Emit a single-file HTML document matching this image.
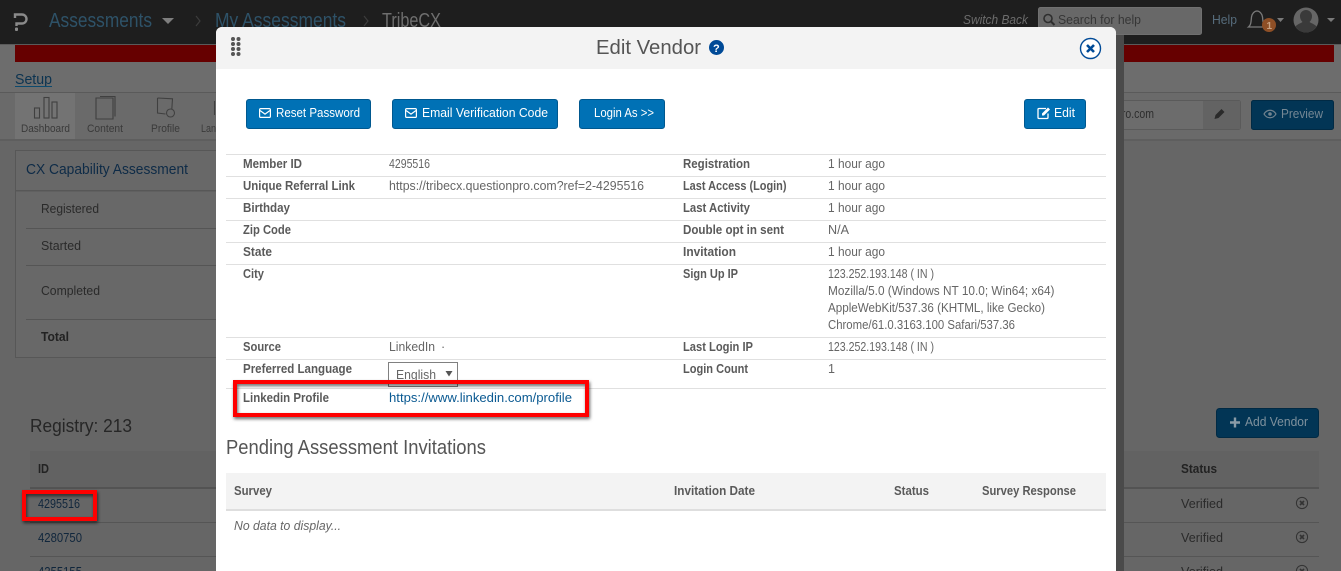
<!DOCTYPE html>
<html><head><meta charset="utf-8"><title>Edit Vendor</title>
<style>
html,body{margin:0;padding:0;width:1341px;height:571px;overflow:hidden;background:#666}
svg{display:block}
text{font-family:"Liberation Sans",sans-serif;font-size:12.5px}
.l{font-weight:bold;fill:#5a5a5a}
.v{fill:#666}
.b{fill:#fff;font-size:13px}
.bg{fill:#2a2a2a}
.t{font-size:11px;fill:#3a3a3a}
</style></head><body>
<svg xmlns="http://www.w3.org/2000/svg" width="1341" height="571" viewBox="0 0 1341 571">
<defs>
<filter id="s" x="-20%" y="-30%" width="140%" height="160%"><feDropShadow dx="1" dy="2" stdDeviation="1.5" flood-color="#000" flood-opacity=".6"/></filter>
<g id="mail" fill="none" stroke="#fff" stroke-width="1.2"><rect x="0.6" y="0.6" width="10.8" height="8.8" rx="1.2"/><path d="M1 2.5l5 3.6 5-3.6"/></g>
<g id="xc" fill="none" stroke="#333"><circle cx="0" cy="0" r="5.6"/><path d="M-2-2L2 2M2-2L-2 2" stroke-width="1.6"/></g>
</defs>

<!-- page background -->
<rect width="1341" height="571" fill="#666"/>
<rect y="44" width="1341" height="49" fill="#6d6d6d"/>
<rect y="0" width="1341" height="44" fill="#1e1e1e"/>
<rect y="44" width="1341" height="1" fill="#5a5a5a"/>
<rect x="15" y="45" width="1319" height="17" fill="#660000"/>
<text x="15" y="84" textLength="37" lengthAdjust="spacingAndGlyphs" style="font-size:14.5px" fill="#0c3350">Setup</text>
<rect x="15" y="86" width="37" height="1" fill="#0c4a6e"/>
<rect y="93" width="1341" height="46" fill="#6a6a6a"/>
<rect y="92" width="1341" height="1" fill="#5a5a5a"/>
<rect y="139" width="1341" height="2" fill="#5e5e5e"/>
<rect x="15" y="93" width="60" height="46" fill="#737373"/>

<!-- top bar -->
<path d="M15 18v-3.500h7a4.500 4.500 0 0 1 0 9h-5.500v2.500" fill="none" stroke="#8a8a8a" stroke-width="2.400"/><rect x="15" y="27.500" width="3" height="3.500" rx="1" fill="#8a8a8a"/>
<text x="49" y="27" textLength="103" lengthAdjust="spacingAndGlyphs" style="font-size:20.500px" fill="#2e5268">Assessments</text>
<path d="M162 18h12l-6 6z" fill="#7e7e7e"/>
<path d="M196 16l4 5-4 5" fill="none" stroke="#3c3c3c" stroke-width="1.200"/>
<text x="215" y="27" textLength="131" lengthAdjust="spacingAndGlyphs" style="font-size:20.500px" fill="#2e5268">My Assessments</text>
<path d="M364 16l4 5-4 5" fill="none" stroke="#3c3c3c" stroke-width="1.200"/>
<text x="382" y="27" textLength="59" lengthAdjust="spacingAndGlyphs" style="font-size:20.500px" fill="#6e6e6e">TribeCX</text>

<text x="963" y="24" textLength="65" lengthAdjust="spacingAndGlyphs" font-style="italic" fill="#6c6c6c">Switch Back</text>
<rect x="1038.500" y="7.500" width="163" height="27" rx="2" fill="#686868" stroke="#707070"/>
<circle cx="1048" cy="18.500" r="4" fill="none" stroke="#2e2e2e" stroke-width="1.600"/><path d="M1051 21.500l3.500 3.500" stroke="#2e2e2e" stroke-width="2"/>
<text x="1058" y="24" textLength="83" lengthAdjust="spacingAndGlyphs" fill="#363636">Search for help</text>
<text x="1212" y="24" textLength="25" lengthAdjust="spacingAndGlyphs" fill="#566c7c">Help</text>
<path d="M1248.500 27c2.500-2 2.500-5 3-10 .5-3.500 3-6 5.500-6s5 2.500 5.500 6c.5 5 .5 8 3 10z" fill="none" stroke="#7a7a7a" stroke-width="1.300"/>
<circle cx="1269" cy="25" r="7" fill="#8e4f26"/>
<text x="1266.500" y="29" style="font-size:10px;font-weight:bold" fill="#c9a283">1</text>
<path d="M1277 18h7l-3.500 4z" fill="#7a7a7a"/>
<circle cx="1306" cy="20" r="12.500" fill="#666"/>
<path d="M1306 32.500a12.500 12.500 0 0 0 10.500-6c-2-2.500-5-3-7-4.500 2-2 2.500-4 2.500-6a6 6 0 0 0-12 0c0 2 .5 4 2.500 6-2 1.500-5 2-7 4.500a12.500 12.500 0 0 0 10.500 6z" fill="#3a3a3a"/>
<path d="M1327 18h8l-4 4z" fill="#7a7a7a"/>

<!-- toolbar -->
<g fill="none" stroke="#404040" stroke-width="1.100">
<rect x="34.500" y="108" width="5" height="10"/><rect x="44" y="97.500" width="5" height="20.500"/><rect x="52" y="102" width="5" height="16"/>
<path d="M96 98h17v21H96z"/><path d="M100 96.500h15v20"/>
<path d="M157.500 98l15 .8-.7 10.500M157.500 98v15l8 1"/><circle cx="170.500" cy="113" r="4"/>
<path d="M214.500 101v14"/>
</g>
<text x="21" y="132" textLength="49" lengthAdjust="spacingAndGlyphs" class="t">Dashboard</text>
<text x="87" y="132" textLength="36" lengthAdjust="spacingAndGlyphs" class="t">Content</text>
<text x="151" y="132" textLength="29" lengthAdjust="spacingAndGlyphs" class="t">Profile</text>
<text x="201" y="132" textLength="15" lengthAdjust="spacingAndGlyphs" class="t">Lan</text>
<rect x="1116" y="100.500" width="124.500" height="29" rx="2" fill="#6c6c6c" stroke="#5a5a5a"/>
<rect x="1203" y="101" width="37" height="28" fill="#636363"/>
<text x="1116" y="118" textLength="38" lengthAdjust="spacingAndGlyphs" fill="#2e2e2e">pro.com</text>
<path d="M1214.500 119l1-4 6-6 3 3-6 6z" fill="#2a2a2a"/>
<rect x="1251.500" y="100.500" width="82" height="29" rx="2" fill="#023555" stroke="#012a44"/>
<path d="M1264 114c3-5 9-5 12 0-3 5-9 5-12 0z" fill="none" stroke="#71838f" stroke-width="1.200"/><circle cx="1270" cy="114" r="1.800" fill="#71838f"/>
<text x="1281" y="118" textLength="42" lengthAdjust="spacingAndGlyphs" fill="#748794">Preview</text>

<!-- card -->
<rect x="15.500" y="150.500" width="220" height="207" fill="#686868" stroke="#575757"/>
<rect x="16" y="190" width="220" height="1.500" fill="#575757"/>
<rect x="26" y="228" width="200" height="1" fill="#555"/>
<rect x="26" y="265" width="200" height="1" fill="#555"/>
<rect x="26" y="319" width="200" height="1" fill="#555"/>
<text x="26" y="174" textLength="162" lengthAdjust="spacingAndGlyphs" style="font-size:14.500px" fill="#0e2b47">CX Capability Assessment</text>
<text x="41" y="213" textLength="58" lengthAdjust="spacingAndGlyphs" class="bg">Registered</text>
<text x="41" y="250" textLength="40" lengthAdjust="spacingAndGlyphs" class="bg">Started</text>
<text x="41" y="295" textLength="59" lengthAdjust="spacingAndGlyphs" class="bg">Completed</text>
<text x="41" y="341" textLength="28" lengthAdjust="spacingAndGlyphs" style="font-weight:bold" fill="#222">Total</text>

<!-- registry -->
<text x="30" y="432" textLength="102" lengthAdjust="spacingAndGlyphs" style="font-size:18.500px" fill="#262626">Registry: 213</text>
<rect x="1216.500" y="408.500" width="102" height="29" rx="3" fill="#023555" stroke="#012a44"/>
<path d="M1230 422.500h10M1235 417.500v10" stroke="#8a9ba7" stroke-width="2.400"/>
<text x="1245" y="426" textLength="63" lengthAdjust="spacingAndGlyphs" fill="#7f919d">Add Vendor</text>
<rect x="30" y="451" width="1289" height="36" fill="#626262"/>
<rect x="30" y="487" width="1289" height="2" fill="#535353"/>
<rect x="30" y="522" width="1289" height="1" fill="#555"/>
<rect x="30" y="556" width="1289" height="1" fill="#555"/>
<text x="38" y="473" textLength="11" lengthAdjust="spacingAndGlyphs" style="font-weight:bold" fill="#222">ID</text>
<text x="1181" y="473" textLength="36" lengthAdjust="spacingAndGlyphs" style="font-weight:bold" fill="#222">Status</text>
<text x="38" y="508" textLength="42" lengthAdjust="spacingAndGlyphs" fill="#10263c">4295516</text>
<text x="38" y="542" textLength="44" lengthAdjust="spacingAndGlyphs" fill="#10263c">4280750</text>
<text x="38" y="576" textLength="44" lengthAdjust="spacingAndGlyphs" fill="#10263c">4255155</text>
<text x="1181" y="508" textLength="42" lengthAdjust="spacingAndGlyphs" class="bg">Verified</text>
<text x="1181" y="542" textLength="42" lengthAdjust="spacingAndGlyphs" class="bg">Verified</text>
<text x="1181" y="576" textLength="42" lengthAdjust="spacingAndGlyphs" class="bg">Verified</text>
<use href="#xc" x="1302" y="503"/><use href="#xc" x="1302" y="537"/><use href="#xc" x="1302" y="571"/>

<!-- red box on page -->
<rect x="24" y="492" width="71" height="27" fill="none" stroke="#ff0000" stroke-width="4" filter="url(#s)"/>

<!-- modal -->
<rect x="1116" y="35" width="8" height="536" fill="#4a4a4a"/>
<path d="M216 571V33a6 6 0 0 1 6-6h888a6 6 0 0 1 6 6v538z" fill="#fff"/>
<path d="M216 69V33a6 6 0 0 1 6-6h888a6 6 0 0 1 6 6v36z" fill="#f3f3f3"/>
<g fill="#555"><circle cx="233" cy="39" r="2"/><circle cx="238.500" cy="39" r="2"/><circle cx="233" cy="44" r="2"/><circle cx="238.500" cy="44" r="2"/><circle cx="233" cy="49" r="2"/><circle cx="238.500" cy="49" r="2"/><circle cx="233" cy="54" r="2"/><circle cx="238.500" cy="54" r="2"/></g>
<text x="596" y="54" textLength="105" lengthAdjust="spacingAndGlyphs" style="font-size:20.500px" fill="#555">Edit Vendor</text>
<circle cx="716.500" cy="47.500" r="7.500" fill="#004a97"/>
<text x="713" y="52" style="font-size:11px;font-weight:bold" fill="#fff">?</text>
<circle cx="1090.500" cy="48.500" r="10" fill="#fff" stroke="#004a97" stroke-width="1.400"/>
<path d="M1087 45l7 7M1094 45l-7 7" stroke="#004a97" stroke-width="2.600"/>

<!-- modal buttons -->
<g fill="#0071b5" stroke="#00588f">
<rect x="246.500" y="99.500" width="124" height="29" rx="2.500"/>
<rect x="392.500" y="99.500" width="165" height="29" rx="2.500"/>
<rect x="579.500" y="99.500" width="85" height="29" rx="2.500"/>
<rect x="1024.500" y="99.500" width="61" height="29" rx="2.500"/>
</g>
<use href="#mail" x="259" y="108"/>
<use href="#mail" x="405" y="108"/>
<text x="276" y="117" textLength="84" lengthAdjust="spacingAndGlyphs" class="b">Reset Password</text>
<text x="422" y="117" textLength="126" lengthAdjust="spacingAndGlyphs" class="b">Email Verification Code</text>
<text x="594" y="117" textLength="60" lengthAdjust="spacingAndGlyphs" class="b">Login As &gt;&gt;</text>
<path d="M1046 108.500h-7a1 1 0 0 0-1 1v8a1 1 0 0 0 1 1h8a1 1 0 0 0 1-1v-4" fill="none" stroke="#fff" stroke-width="1.300"/>
<path d="M1042 113.500l6-6 2 2-6 6h-2z" fill="#fff"/>
<text x="1054" y="117" textLength="21" lengthAdjust="spacingAndGlyphs" class="b">Edit</text>

<!-- info rows -->
<g fill="#e0e0e0">
<rect x="226" y="154" width="880" height="1"/><rect x="226" y="176" width="880" height="1"/><rect x="226" y="198" width="880" height="1"/><rect x="226" y="220" width="880" height="1"/><rect x="226" y="242" width="880" height="1"/><rect x="226" y="264" width="880" height="1"/><rect x="226" y="337" width="880" height="1"/><rect x="226" y="359" width="880" height="1"/><rect x="226" y="388" width="880" height="1"/>
</g>
<text class="l" x="243" y="168" textLength="59" lengthAdjust="spacingAndGlyphs">Member ID</text>
<text class="l" x="243" y="190" textLength="112" lengthAdjust="spacingAndGlyphs">Unique Referral Link</text>
<text class="l" x="243" y="212" textLength="47" lengthAdjust="spacingAndGlyphs">Birthday</text>
<text class="l" x="243" y="234" textLength="48" lengthAdjust="spacingAndGlyphs">Zip Code</text>
<text class="l" x="243" y="256" textLength="29" lengthAdjust="spacingAndGlyphs">State</text>
<text class="l" x="243" y="278" textLength="21" lengthAdjust="spacingAndGlyphs">City</text>
<text class="l" x="243" y="351" textLength="38" lengthAdjust="spacingAndGlyphs">Source</text>
<text class="l" x="243" y="373" textLength="109" lengthAdjust="spacingAndGlyphs">Preferred Language</text>
<text class="l" x="243" y="402" textLength="86" lengthAdjust="spacingAndGlyphs">Linkedin Profile</text>
<text class="v" x="389" y="168" textLength="41" lengthAdjust="spacingAndGlyphs">4295516</text>
<text class="v" x="389" y="190" textLength="255" lengthAdjust="spacingAndGlyphs">https://tribecx.questionpro.com?ref=2-4295516</text>
<text class="v" x="389" y="351" textLength="46" lengthAdjust="spacingAndGlyphs">LinkedIn</text>
<text class="v" x="441" y="351">·</text>
<rect x="388.500" y="362.500" width="69" height="24" fill="#fff" stroke="#808080"/>
<text x="396" y="379" textLength="40" lengthAdjust="spacingAndGlyphs" fill="#666">English</text>
<path d="M445.500 371h7l-3.500 5.500z" fill="#555"/>
<text x="389" y="402" textLength="183" lengthAdjust="spacingAndGlyphs" fill="#0b5a92">https://www.linkedin.com/profile</text>

<text class="l" x="683" y="168" textLength="67" lengthAdjust="spacingAndGlyphs">Registration</text>
<text class="l" x="683" y="190" textLength="103.500" lengthAdjust="spacingAndGlyphs">Last Access (Login)</text>
<text class="l" x="683" y="212" textLength="67" lengthAdjust="spacingAndGlyphs">Last Activity</text>
<text class="l" x="683" y="234" textLength="101" lengthAdjust="spacingAndGlyphs">Double opt in sent</text>
<text class="l" x="683" y="256" textLength="53" lengthAdjust="spacingAndGlyphs">Invitation</text>
<text class="l" x="683" y="278" textLength="55" lengthAdjust="spacingAndGlyphs">Sign Up IP</text>
<text class="l" x="683" y="351" textLength="70" lengthAdjust="spacingAndGlyphs">Last Login IP</text>
<text class="l" x="683" y="373" textLength="65" lengthAdjust="spacingAndGlyphs">Login Count</text>
<text class="v" x="828" y="168" textLength="57" lengthAdjust="spacingAndGlyphs">1 hour ago</text>
<text class="v" x="828" y="190" textLength="57" lengthAdjust="spacingAndGlyphs">1 hour ago</text>
<text class="v" x="828" y="212" textLength="57" lengthAdjust="spacingAndGlyphs">1 hour ago</text>
<text class="v" x="828" y="234" textLength="21" lengthAdjust="spacingAndGlyphs">N/A</text>
<text class="v" x="828" y="256" textLength="57" lengthAdjust="spacingAndGlyphs">1 hour ago</text>
<text class="v" x="828" y="278" textLength="106" lengthAdjust="spacingAndGlyphs">123.252.193.148 ( IN )</text>
<text class="v" x="828" y="295" textLength="226.500" lengthAdjust="spacingAndGlyphs">Mozilla/5.0 (Windows NT 10.0; Win64; x64)</text>
<text class="v" x="828" y="312" textLength="217" lengthAdjust="spacingAndGlyphs">AppleWebKit/537.36 (KHTML, like Gecko)</text>
<text class="v" x="828" y="329" textLength="187" lengthAdjust="spacingAndGlyphs">Chrome/61.0.3163.100 Safari/537.36</text>
<text class="v" x="828" y="351" textLength="106" lengthAdjust="spacingAndGlyphs">123.252.193.148 ( IN )</text>
<text class="v" x="828" y="373">1</text>

<!-- red box in modal -->
<rect x="235" y="382" width="352" height="33" fill="none" stroke="#ff0000" stroke-width="4" filter="url(#s)"/>

<!-- pending -->
<text x="226" y="454" textLength="260" lengthAdjust="spacingAndGlyphs" style="font-size:20.500px" fill="#555">Pending Assessment Invitations</text>
<rect x="226" y="473" width="880" height="36" fill="#f3f3f3"/>
<rect x="226" y="509" width="880" height="2" fill="#dedede"/>
<text class="l" x="234" y="495" textLength="38" lengthAdjust="spacingAndGlyphs">Survey</text>
<text class="l" x="674" y="495" textLength="81" lengthAdjust="spacingAndGlyphs">Invitation Date</text>
<text class="l" x="894" y="495" textLength="35" lengthAdjust="spacingAndGlyphs">Status</text>
<text class="l" x="982" y="495" textLength="94" lengthAdjust="spacingAndGlyphs">Survey Response</text>
<text class="v" x="234" y="530" textLength="107" lengthAdjust="spacingAndGlyphs" font-style="italic">No data to display...</text>
</svg>
</body></html>
